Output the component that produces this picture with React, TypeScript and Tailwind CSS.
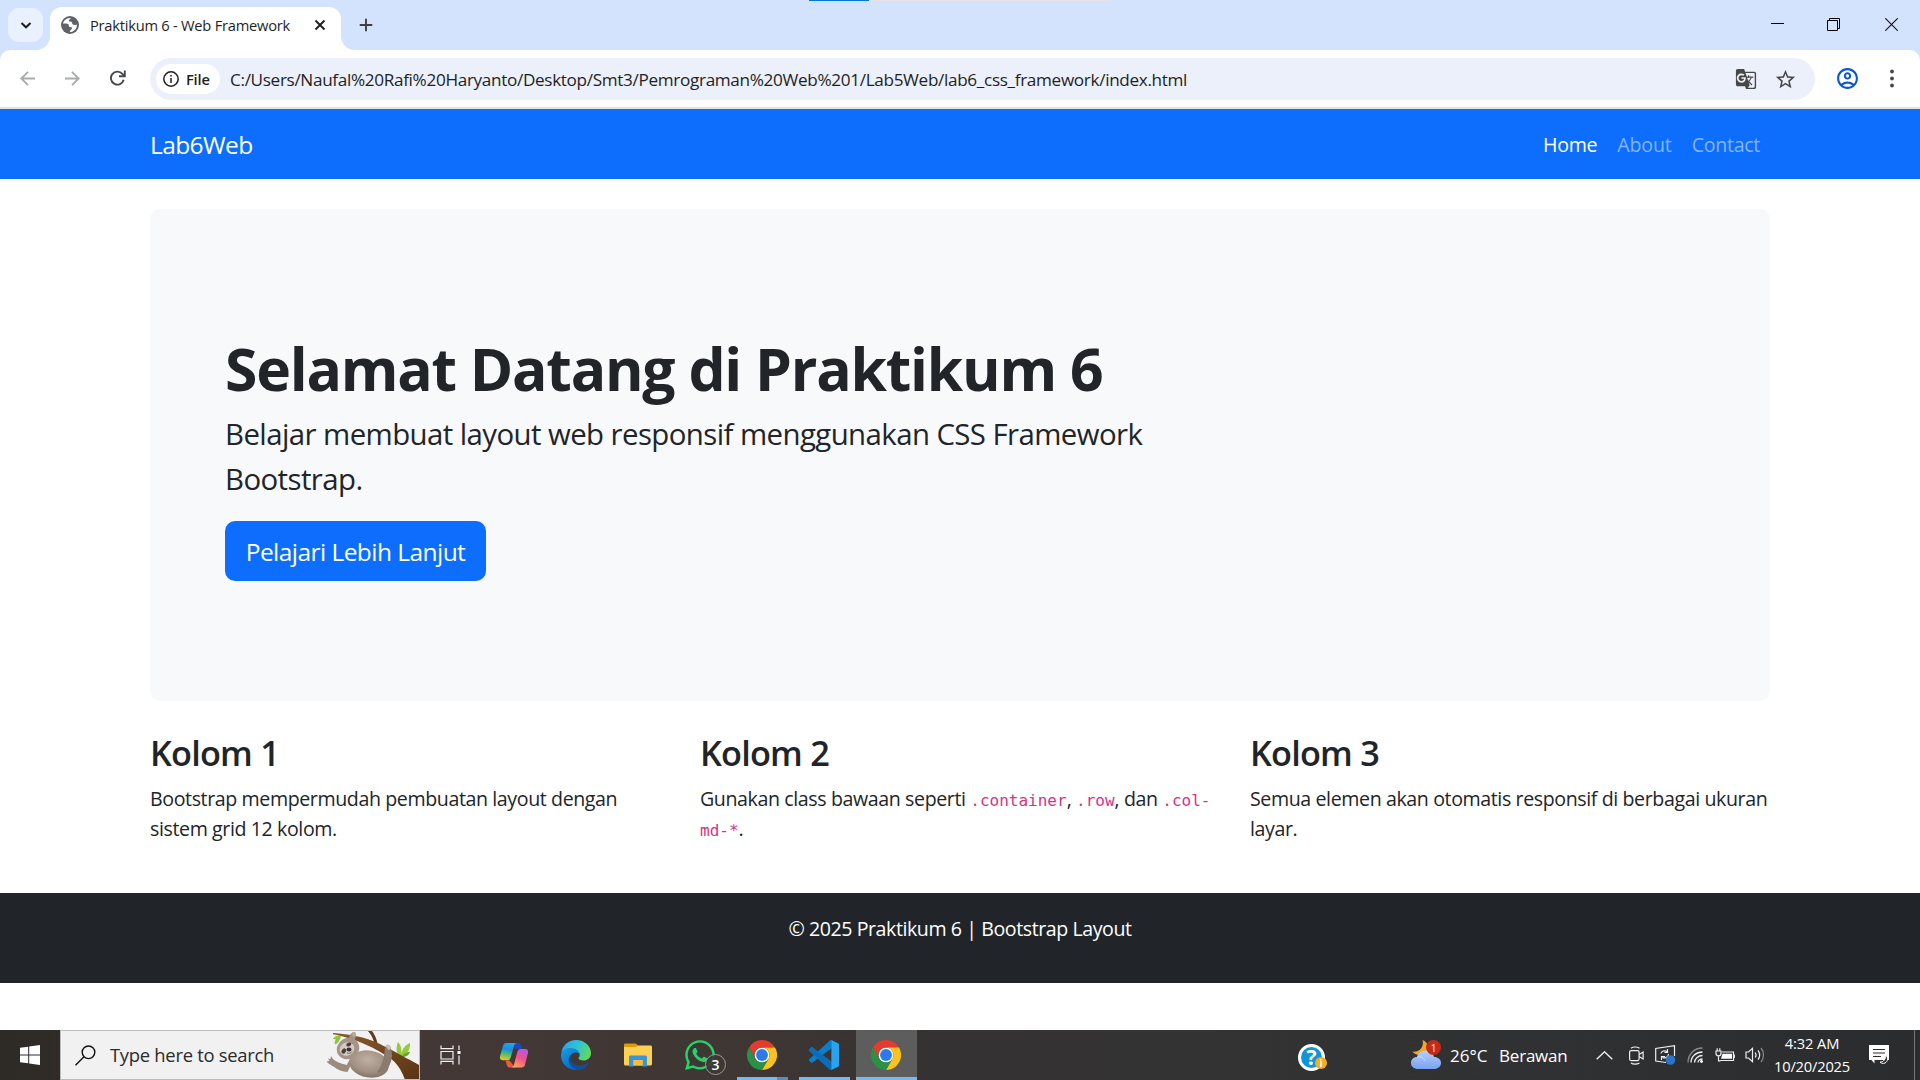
import type { ReactNode } from "react";
import { FaWhatsapp } from "react-icons/fa";
import { MdGTranslate, MdStarOutline, MdOutlineAccountCircle } from "react-icons/md";

function GlobeIcon() {
  return (
    <svg className="size-[18px]" viewBox="0 0 18 18">
      <circle cx="9" cy="9" r="9" fill="#5f6368" />
      <path
        d="M9.2 1.9C5.400 2 2.600 4.400 2 7.600c2.400-.3 5-.2 5.600.9.500 1-.2 1.700.6 2.300.7.500 2.200.1 2.700 1 .4.800-.4 1.700-1.200 2.300-.5.400-.9 1.200-.9 1.900 1.800.1 3.700-.6 5-2 1.600-1.600 2.200-3.500 2.100-5.500-1.500.9-3.500.8-4.300-.2-.7-.9-.1-1.900-1-2.400-.8-.4-2.200 0-2.700-.8-.5-.9.4-1.500 1.300-2 .5-.3.500-.8 0-1.200z"
        fill="#fff"
      />
      <path d="M9.500 1.500c2.500.2 4.700 1.400 5.900 3.500-.8.700-2.200.8-2.900.2-.6-.6-2-.6-2.900-.5.700-.7 1.100-1.400.9-2.200z" fill="#5f6368" />
    </svg>
  );
}

function ChromeIcon() {
  return (
    <svg className="size-[30px]" viewBox="0 0 48 48">
      <circle cx="24" cy="24" r="12" fill="#fff" />
      <path d="M24,12H44.7812a23.9939,23.9939,0,0,0-41.5639.0029L13.6079,30l.0093-.0024A11.9852,11.9852,0,0,1,24,12Z" fill="#e33b2e" />
      <path d="M34.3913,30.0029,24.0007,48A23.994,23.994,0,0,0,44.78,12.0031H23.9989l-.0025.0093A11.985,11.985,0,0,1,34.3913,30.0029Z" fill="#fcc31e" />
      <path d="M13.6086,30.0031,3.218,12.006A23.994,23.994,0,0,0,24.0025,48L34.3931,30.0029l-.0067-.0068a11.9852,11.9852,0,0,1-20.7778.007Z" fill="#2a9147" />
      <circle cx="24" cy="24" r="9.500" fill="#2a7bea" />
    </svg>
  );
}

function VsCodeIcon() {
  return (
    <svg className="size-[30px]" viewBox="0 0 24 24">
      <path
        d="M23.150 2.587L18.210.21a1.494 1.494 0 0 0-1.705.29l-9.460 8.630-4.120-3.128a.999.999 0 0 0-1.276.057L.327 7.261A1 1 0 0 0 .326 8.740L3.899 12 .326 15.260a1 1 0 0 0 .001 1.479L1.650 17.940a.999.999 0 0 0 1.276.057l4.120-3.128 9.460 8.630a1.492 1.492 0 0 0 1.704.29l4.942-2.377A1.500 1.500 0 0 0 24 20.060V3.939a1.500 1.500 0 0 0-.85-1.352zm-5.146 14.861L10.826 12l7.178-5.448v10.896z"
        fill="#0a7fcb"
      />
      <path d="M2.900 6 18 17.450V23.900l-1.500-.4L.3 8.700c-.4-.4-.4-1 0-1.400L1.650 6.060c.4-.3.900-.3 1.250-.06z" fill="#0e6cb5" />
      <path d="M18 .15 23.150 2.587c.5.250.850.8.850 1.352V20.060c0 .6-.3 1.100-.85 1.350L18 23.850z" fill="#29a3ee" />
    </svg>
  );
}

function EdgeIcon() {
  return (
    <svg className="size-[30px]" viewBox="0 0 30 30">
      <defs>
        <linearGradient id="edgeTop" x1="0" y1="0.3" x2="1" y2="0.6">
          <stop offset="0" stopColor="#2aa5e4" />
          <stop offset="0.5" stopColor="#30c1d6" />
          <stop offset="1" stopColor="#61dd52" />
        </linearGradient>
        <linearGradient id="edgeLeft" x1="0" y1="0" x2="0.6" y2="1">
          <stop offset="0" stopColor="#1b9de2" />
          <stop offset="1" stopColor="#0767c4" />
        </linearGradient>
      </defs>
      <path d="M.4 12.500C1.500 5.200 7.500 0 15 0c9 0 15 6.500 15 13.200 0 4.300-3.400 7.300-7.400 7.300-3.300 0-5.200-1.200-5.200-2.200 0-.6 1.300-1 1.300-3.200 0-3.200-3-6.300-8-6.300C6 8.800 2 10.200.4 12.500z" fill="url(#edgeTop)" />
      <path d="M.1 14C.7 10 4.500 7.900 9 7.900c5.500 0 9.500 3.200 9.600 6.900-1-1.500-2.400-2.300-4.200-2.300-3.400 0-5.600 3-5.600 6.500 0 5 4 9.500 8.600 10.800C7.800 31.200-.9 24 .1 14z" fill="url(#edgeLeft)" />
      <path d="M10.500 14.500c-3.300 5.800 1.500 11 8 11 3.400 0 6.300-1.200 8.600-3 .5-.3 1 .2.700.7C25.500 27.300 21.200 30 17.500 30 12 29.400 7.600 25 7.600 19.800c0-2.200 1-4.200 2.900-5.300z" fill="#0f4f9e" />
    </svg>
  );
}

function CopilotIcon() {
  return (
    <svg className="size-[30px]" viewBox="0 0 30 30">
      <defs>
        <linearGradient id="cpLeft" x1="0.5" y1="0" x2="0.3" y2="1">
          <stop offset="0" stopColor="#1ea8f0" />
          <stop offset="0.35" stopColor="#1c8be0" />
          <stop offset="0.65" stopColor="#4fc06a" />
          <stop offset="1" stopColor="#f4c51f" />
        </linearGradient>
        <linearGradient id="cpRight" x1="0.8" y1="0" x2="0.3" y2="1">
          <stop offset="0" stopColor="#b15ae8" />
          <stop offset="0.5" stopColor="#f0518c" />
          <stop offset="1" stopColor="#fda25c" />
        </linearGradient>
      </defs>
      <path d="M14 3h5.500c1.600 0 2.300 1 2.800 2.400L23.500 9H17z" fill="#1b47c9" />
      <path d="M7.500 3h9.800c-1.300.6-1.900 1.600-2.400 3.300L11.700 17.500c-.6 2-1.600 2.800-3.500 2.800H4c-2.400 0-3.600-1.500-2.900-4.200L4 5.700C4.500 4 5.600 3 7.500 3z" fill="url(#cpLeft)" />
      <path d="M16 27.500h-5.500c-1.600 0-2.300-1-2.800-2.400L6.500 20.500h4z" fill="#ee5a3c" />
      <path d="M22.500 27.500h-9.800c1.300-.6 1.900-1.600 2.400-3.300L18.300 12c.6-2 1.600-3 3.500-3H26c2.400 0 3.600 1.500 2.900 4.200L26 24.800c-.5 1.700-1.600 2.700-3.500 2.700z" fill="url(#cpRight)" />
    </svg>
  );
}

function ExplorerIcon() {
  return (
    <svg className="h-[24px] w-[28px]" viewBox="0 0 28 24">
      <path d="M0 2C0 .9.700.5 1.500.5H11c.8 0 1.200.2 1.700.8L14 3v4H0z" fill="#dd9a07" />
      <path d="M0 4h12l1.500-1.500h13c.9 0 1.500.6 1.500 1.500v17c0 .9-.6 1.500-1.500 1.500h-25C.6 22.500 0 21.900 0 21z" fill="#fccf55" />
      <path d="M5 23.500V14c0-1 .7-1.500 1.500-1.500h15c.9 0 1.500.6 1.500 1.500v9.500h-4.500V17h-9v6.500z" fill="#3a94d8" />
      <path d="M9.500 17h9v5.500h-9z" fill="#f6bd3a" />
    </svg>
  );
}

function TaskViewIcon() {
  return (
    <svg className="-ml-[3px] h-[20px] w-[21px]" viewBox="0 0 21 20" fill="none" stroke="#f3f3f3" strokeWidth="1.200">
      <path d="M1 .5v3.200h12V.5M1 19.500v-3.200h12v3.200M1 6.500h12v7.500H1zM19 .5v4.500M19 10.500v9" />
      <path d="M17.500 6h3v3h-3z" fill="#fff" stroke="none" />
    </svg>
  );
}

function SlothArt() {
  return (
    <svg className="h-[48px] w-[95px]" viewBox="5 1 95 48">
      <defs>
        <radialGradient id="fur" cx="0.45" cy="0.35" r="0.75">
          <stop offset="0" stopColor="#bfb0a3" />
          <stop offset="0.6" stopColor="#a08f82" />
          <stop offset="1" stopColor="#75655a" />
        </radialGradient>
        <linearGradient id="bark" x1="0" y1="0" x2="1" y2="1">
          <stop offset="0" stopColor="#8a5a2e" />
          <stop offset="1" stopColor="#5a3413" />
        </linearGradient>
      </defs>
      <path d="M22 6c-4-1-7 .5-8 3 2 0 3 .5 3 .5s-2 1-1 5c3-1 5-4 6-8.500z" fill="#8cc63a" />
      <path d="M80 26c-3-4-3-9-1-14 3 3 4 8 3 13 1-6 4-10 9-12 .5 6-3 11-8 14z" fill="#93cb3c" />
      <path d="M91 22c-1 3-4 5-8 5 1-3 4-5 8-5z" fill="#6aa52a" />
      <path d="M48 0c4 4 6 8 8 15l3 1C58 9 55 3 52 0z" fill="#5e3b1c" />
      <path d="M14 3c16 1 32 4 46 10.500 10 5 20 10.500 26 14 6 3 10 5 14 7.500v15H86c-3-9-8-17-15-22C57 19 42 10 14 4.200z" fill="url(#bark)" />
      <path d="M38 22c-4 2-8 8-10 13-5-1-11-3-14-6l-2-3-.5 3-2.500-.5 1.500 2.500-3 .5c3 3 5 4 7 5 4 3 9 5.500 14 5.500z" fill="#9b8b7e" />
      <ellipse cx="50" cy="34" rx="20" ry="13.500" transform="rotate(10 50 34)" fill="url(#fur)" />
      <path d="M30 9c0-3 1-5 3-6 2-.5 4 .5 4 2l-1 5c2 2 4 5 4 9l-6 5z" fill="#a39285" />
      <path d="M66 18c2-2 5-1 6 1 2 6 1 12-3 19-2 4-8 6-11 4 5-6 7-14 8-24z" fill="#8b7a6e" />
      <ellipse cx="29" cy="18.500" rx="11.500" ry="10.500" transform="rotate(-30 29 18.500)" fill="#a59487" />
      <ellipse cx="28" cy="19" rx="7.500" ry="6.500" transform="rotate(-25 28 19)" fill="#d3cac2" />
      <ellipse cx="24.800" cy="21" rx="2" ry="2.800" transform="rotate(35 24.800 21)" fill="#4a403b" />
      <ellipse cx="29.800" cy="14.500" rx="2.600" ry="1.800" transform="rotate(-20 29.800 14.500)" fill="#4a403b" />
      <ellipse cx="30" cy="19.500" rx="2.500" ry="2" fill="#39312e" />
      <path d="M28 23c2 .8 4 .2 5-1.500" fill="none" stroke="#5a4d46" strokeWidth="0.800" />
      <path d="M67 17c-1-1.500 0-2.500 1-2.500s4 .5 4 3l-2 3z" fill="#cbbdb1" />
      <path d="M33 2.500c2-1 4-.5 4 1.500l-.5 3-3-.5z" fill="#b9a99b" />
    </svg>
  );
}

function WeatherIcon() {
  return (
    <svg className="size-[30px]" viewBox="0 0 30 30">
      <defs>
        <linearGradient id="cloud" x1="0" y1="0" x2="0" y2="1">
          <stop offset="0" stopColor="#b5cffc" />
          <stop offset="1" stopColor="#79a3ef" />
        </linearGradient>
      </defs>
      <path d="M11.500 0c4.500 1.500 6.500 6 4.500 10.500-2.500 5-9.500 6.500-15 1C8 13 13.500 7 11.500 0z" fill="#f5a623" />
      <path d="M7 29c-4 0-7-2.500-7-6s2.500-6 6-6c1-4 4.500-6.500 8.500-6.500 4.500 0 7.500 2.500 8.500 6.500 4 0 7 2.500 7 6s-3 6-7 6z" fill="url(#cloud)" />
      <path d="M6 17c4-1 7 1 8 4" fill="none" stroke="#d1e1ff" strokeWidth="0.800" />
    </svg>
  );
}

function TaskButton({ children, active = false }: { children: ReactNode; active?: boolean }) {
  return (
    <div className={active ? "relative flex h-full w-[61px] items-center justify-center bg-[#5e5d5d] pr-px" : "relative flex h-full w-[62px] items-center justify-center"}>
      {children}
    </div>
  );
}

function TabStrip() {
  return (
    <div className="relative flex h-[50px] bg-[#d3e2fd]">
      <div className="absolute left-[809px] top-0 h-px w-[60px] bg-[#0078d7]" />
      <div className="absolute left-[869px] top-0 h-px w-[241px] bg-[#e4e4e6]" />
      <div className="ml-2 mt-2 flex h-[34px] w-[35px] items-center justify-center rounded-[11px] bg-[#e9f1ff]">
        <svg className="size-[12px]" viewBox="0 0 12 12" fill="none" stroke="#1f1f1f" strokeWidth="2">
          <path d="M1.500 4 6 8.300 10.500 4" />
        </svg>
      </div>
      <div className="relative ml-[7px] mt-[7px] flex h-[43px] w-[291px] items-center rounded-t-[12px] bg-white pb-[8px] pl-[11px]">
        <svg className="absolute -left-[14px] bottom-0 size-[14px]" viewBox="0 0 14 14"><path d="M14 0v14H0A14 14 0 0 0 14 0z" fill="#fff" /></svg>
        <svg className="absolute -right-[14px] bottom-0 size-[14px]" viewBox="0 0 14 14"><path d="M0 0v14h14A14 14 0 0 1 0 0z" fill="#fff" /></svg>
        <GlobeIcon />
        <span className="ml-[11px] w-[212px] whitespace-nowrap pt-px text-[14.700px] leading-5 tracking-[-0.25px] text-[#1f1f1f]">Praktikum 6 - Web Framework</span>
        <svg className="ml-[12px] size-[12px]" viewBox="0 0 12 12" stroke="#1f1f1f" strokeWidth="1.900">
          <path d="M1.500 1.500l9 9M10.500 1.500l-9 9" />
        </svg>
      </div>
      <svg className="ml-[18px] mt-[18px] size-[14px]" viewBox="0 0 14 14" stroke="#3c4043" strokeWidth="1.900">
        <path d="M7 .7v12.600M.7 7h12.600" />
      </svg>
      <div className="ml-auto mr-[22px] flex items-start pt-[18px]">
        <div className="mr-[43px] mt-[5px] h-px w-[13px] bg-black" />
        <svg className="mr-[45px] size-[13px]" viewBox="0 0 13 13" fill="none" stroke="#000" strokeWidth="1">
          <path d="M.5 2.500h10v10H.5zM2.500 2.500V.5h10v10h-2" />
        </svg>
        <svg className="size-[13px]" viewBox="0 0 13 13" stroke="#111" strokeWidth="1.100">
          <path d="M.3.3l12.400 12.400M12.700.3.3 12.700" />
        </svg>
      </div>
    </div>
  );
}

function Toolbar() {
  return (
    <div className="bg-[#d3e2fd]">
      <div className="flex h-[59px] items-start rounded-t-[10px] border-b-2 border-[#e1e3e1] bg-white pt-2">
        <svg className="ml-[20px] mt-[13px] size-[15px]" viewBox="0 0 15 15" fill="none" stroke="#a9acae" strokeWidth="1.900">
          <path d="M15 7.500H1.500M8 .8 1.300 7.500 8 14.200" />
        </svg>
        <svg className="ml-[30px] mt-[13px] size-[15px]" viewBox="0 0 15 15" fill="none" stroke="#a9acae" strokeWidth="1.900">
          <path d="M0 7.500h13.500M7 .8l6.700 6.700L7 14.200" />
        </svg>
        <svg className="ml-[30px] mt-[12px] size-[16px]" viewBox="0 0 16 16" fill="none" stroke="#45484b" strokeWidth="1.900">
          <path d="M13.700 9.800A6.500 6.500 0 1 1 12.400 3.900L14.300 5.700" />
          <path d="M14.800.5v5.800H9" />
        </svg>
        <div className="ml-[24px] flex h-[42px] w-[1665px] items-center rounded-full bg-[#ebf0fa] pl-[6px]">
          <div className="flex h-[30px] w-[64px] items-center rounded-full bg-white pl-[7px]">
            <svg className="size-[16px]" viewBox="0 0 16 16" fill="none" stroke="#1f1f1f" strokeWidth="1.500">
              <circle cx="8" cy="8" r="7.200" />
              <path d="M8 7v5M8 4v1.600" />
            </svg>
            <span className="ml-[7px] text-[14.700px] font-semibold leading-5 tracking-[-0.2px] text-[#1f1f1f]">File</span>
          </div>
          <span className="ml-[10px] whitespace-nowrap pt-px text-[17.150px] leading-6 tracking-[-0.330px] text-[#1f1f1f]">
            C:/Users/Naufal%20Rafi%20Haryanto/Desktop/Smt3/Pemrograman%20Web%201/Lab5Web/lab6_css_framework/index.html
          </span>
          <MdGTranslate className="ml-auto size-[22px] text-[#474747]" />
          <MdStarOutline className="ml-[17px] mr-[18px] size-[23px] text-[#474747]" />
        </div>
        <MdOutlineAccountCircle className="ml-[20px] mt-[8px] size-[25px] text-[#0b57d0]" />
        <svg className="ml-[30px] mt-[11px] h-[19px] w-[4px]" viewBox="0 0 4 19" fill="#45484b">
          <circle cx="2" cy="2.500" r="1.900" />
          <circle cx="2" cy="9.500" r="1.900" />
          <circle cx="2" cy="16.500" r="1.900" />
        </svg>
      </div>
    </div>
  );
}

function Navbar() {
  return (
    <div className="flex h-[70px] items-center justify-between bg-[#0d6efd] px-[150px] pt-[2px]">
      <span className="text-[24.500px] tracking-[-0.6px] text-white">Lab6Web</span>
      <nav className="flex gap-5 pr-[10px] text-[19.600px]">
        <span className="tracking-[-0.3px] text-white">Home</span>
        <span className="tracking-[-0.15px] text-[#85b5fe]">About</span>
        <span className="tracking-[-0.3px] text-[#85b5fe]">Contact</span>
      </nav>
    </div>
  );
}

function Code({ children }: { children: ReactNode }) {
  return <code className="font-['DejaVu_Sans_Mono',monospace] text-[16px] leading-none tracking-normal text-[#d63384]">{children}</code>;
}

function Column({ title, children }: { title: string; children: ReactNode }) {
  return (
    <div className="w-[520px]">
      <h3 className="mb-[9px] pt-px text-[34.300px] font-semibold leading-[42px] tracking-[-0.8px]">{title}</h3>
      <p className="pt-px text-[19.600px] leading-[30px] tracking-[-0.395px]">{children}</p>
    </div>
  );
}

function Page() {
  return (
    <>
      <main className="h-[684px] px-[150px] pt-[30px]">
        <section className="h-[492px] rounded-[10px] bg-[#f8f9fa] px-[75px] pt-[120px]">
          <h1 className="pt-[3px] text-[58.800px] font-bold leading-[72px] tracking-[-1.230px]">Selamat Datang di Praktikum 6</h1>
          <p className="mt-[8px] w-[1000px] text-[29.400px] leading-[45px] tracking-[-0.580px]">
            Belajar membuat layout web responsif menggunakan CSS Framework Bootstrap.
          </p>
          <button className="mt-[19px] h-[60px] w-[261px] rounded-[10px] bg-[#0d6efd] pt-[3px] text-[24.500px] tracking-[-0.550px] text-white">
            Pelajari Lebih Lanjut
          </button>
        </section>
        <section className="mt-[30px] flex gap-[30px]">
          <Column title="Kolom 1">Bootstrap mempermudah pembuatan layout dengan sistem grid 12 kolom.</Column>
          <Column title="Kolom 2">
            Gunakan class bawaan seperti <Code>.container</Code>, <Code>.row</Code>, dan <Code>.col-md-*</Code>.
          </Column>
          <Column title="Kolom 3">Semua elemen akan otomatis responsif di berbagai ukuran layar.</Column>
        </section>
      </main>
      <footer className="mt-[30px] h-[90px] bg-[#212529] pt-[21px] text-center text-[19.600px] leading-[30px] tracking-[-0.430px] text-white">
        © 2025 Praktikum 6 | Bootstrap Layout
      </footer>
    </>
  );
}

function Tray() {
  return (
    <div className="flex h-full items-center">
      <svg className="mr-[16px] h-[9px] w-[17px]" viewBox="0 0 17 9" fill="none" stroke="#eee" strokeWidth="1.400"><path d="M.7 8.300 8.500.8l7.800 7.500" /></svg>
      <svg className="mr-[11px] h-[19px] w-[15px]" viewBox="0 0 15 19" fill="none" stroke="#eee" strokeWidth="1.200">
        <rect x=".6" y="4.600" width="9.500" height="10" rx="1.500" />
        <path d="M10.100 8.500l4-2.500v7l-4-2.500M2 2.200C4 .6 8 .6 10.500 2.200M2 17c2 1.500 6 1.500 8.500 0" />
      </svg>
      <svg className="mr-[11px] h-[20px] w-[21px]" viewBox="0 0 21 20" fill="none" stroke="#eee" strokeWidth="1.200">
        <path d="M11 17.500 .7 16V3.500L19.500.7V11" />
        <path d="M6 8.500C6.500 6 9.500 5 12 6.800M12.500 4v3.500H9.500M13.500 9c0 3-3.500 5-6 3.200M6.500 15v-3.500h3.500" />
        <circle cx="15.500" cy="15" r="4.800" fill="#2c74c9" stroke="none" />
      </svg>
      <svg className="mr-[12px] size-[16px]" viewBox="0 0 16 16" fill="none" strokeWidth="1.300">
        <path d="M1 15.500C1 7.500 7 1 15.500 1" stroke="#8c8c8c" />
        <path d="M4 15.500C4 9.500 9 5 15.500 5M7.500 15.500c0-3.500 3.500-7 8-7M11 15.500c0-2 2-3.500 4.500-3.500" stroke="#eee" />
        <circle cx="14.500" cy="14.500" r="1.400" fill="#fff" />
      </svg>
      <svg className="mr-[10px] h-[14px] w-[20px]" viewBox="0 0 20 14" fill="none" stroke="#eee" strokeWidth="1.200">
        <path d="M5.500 12.500h13v-8.500H7M19.300 6.500v3.500M1 3h5v2.500C6 7 5 7.800 3.500 7.800S1 7 1 5.500zM2.200 3V.3M4.800 3V.3M3.500 7.800v5h2" />
        <path d="M7.500 5.800h9.500v5H6z" fill="#fff" stroke="none" />
      </svg>
      <svg className="h-[18px] w-[20px]" viewBox="0 0 20 18" fill="none" stroke="#eee" strokeWidth="1.200">
        <path d="M1 6v6h2.500l4 3.700V2.300L3.500 6z" />
        <path d="M10.200 6.500c1 1.500 1 3.500 0 5M13 4.300c2 2.800 2 6.600 0 9.400" />
        <path d="M16 2c3.300 4 3.300 10 0 14" stroke="#8c8c8c" />
      </svg>
      <div className="flex w-[94px] flex-col items-center text-[14.700px] leading-[23px] text-white">
        <span className="tracking-[-0.1px]">4:32 AM</span>
        <span className="tracking-[-0.2px]">10/20/2025</span>
      </div>
      <svg className="ml-[10px] mr-[24px] size-[21px]" viewBox="0 0 21 21">
        <path d="M0 0h20v15H5.500v3.500L2.500 15H0z" fill="#fff" />
        <path d="M4 4.500h12M4 8h12M4 11.500h8" stroke="#2d2d2e" strokeWidth="1.200" />
        <path d="M16.500 10c3 2 2.500 6.500-.5 8-2 .9-4 .3-5-1 3.500.3 6-3 5.500-7z" fill="#2d2d2e" stroke="#fff" strokeWidth="1" />
      </svg>
      <div className="mr-[5px] h-full w-px bg-[#777]" />
    </div>
  );
}

function Taskbar() {
  return (
    <div className="mt-auto flex h-[50px] items-center bg-[linear-gradient(90deg,#2e2a25_0%,#352f2b_10%,#433835_22%,#3f3734_38%,#343232_49%,#343333_60%,#303132_80%,#2a2c2d_100%)]">
      <div className="flex w-[60px] justify-center">
        <svg className="size-[20px]" viewBox="0 0 20 20" fill="#fff">
          <path d="M0 2.800 8.200 1.700v7.800H0zM9.200 1.500 20 0v9.500H9.200zM0 10.500h8.200v7.800L0 17.200zM9.200 10.500H20V20L9.200 18.500z" />
        </svg>
      </div>
      <div className="flex h-full w-[360px] items-center border border-[#bdbdbd] bg-[#f1f1f1]">
        <svg className="ml-[14px] size-[21px]" viewBox="0 0 21 21" fill="none" stroke="#111" strokeWidth="1.400">
          <circle cx="13.500" cy="7.300" r="6.300" />
          <path d="M9 11.800.5 20.300" />
        </svg>
        <span className="ml-[14px] w-[170px] whitespace-nowrap text-[18.400px] tracking-[-0.270px] text-[#2b2b2b]">Type here to search</span>
        <div className="ml-auto"><SlothArt /></div>
      </div>
      <div className="ml-px flex h-full">
        <TaskButton><TaskViewIcon /></TaskButton>
        <TaskButton><CopilotIcon /></TaskButton>
        <TaskButton><EdgeIcon /></TaskButton>
        <TaskButton><ExplorerIcon /></TaskButton>
        <TaskButton>
          <FaWhatsapp className="size-[34px] text-[#25d366]" />
          <div className="absolute left-[36px] top-[24px] flex size-[21px] items-center justify-center rounded-full border border-[#9a9a9a] bg-[#3d3735]/90 text-[14px] font-semibold leading-none text-white">3</div>
        </TaskButton>
        <TaskButton>
          <ChromeIcon />
          <div className="absolute bottom-0 left-[6px] h-[3px] w-[40px] bg-[#76b9ed]" />
          <div className="absolute bottom-0 left-[46px] h-[3px] w-[11px] bg-[#5b8db9]" />
        </TaskButton>
        <TaskButton>
          <VsCodeIcon />
          <div className="absolute bottom-0 left-[6px] h-[3px] w-[51px] bg-[#76b9ed]" />
        </TaskButton>
        <div className="ml-px h-full">
          <TaskButton active>
            <ChromeIcon />
            <div className="absolute bottom-0 left-0 h-[3px] w-full bg-[#76b9ed]" />
          </TaskButton>
        </div>
      </div>
      <div className="ml-auto flex h-full items-center">
        <div className="relative mr-[86px] mt-1 flex size-[27px] items-center justify-center rounded-full border-[3px] border-white bg-[#1095d6] text-[21px] font-bold leading-none text-white">
          ?
          <div className="absolute left-[14px] top-[10px] flex size-[12px] items-center justify-center rounded-full bg-[#f2ae1c] text-[10px] font-bold leading-none text-white">i</div>
        </div>
        <div className="relative">
          <WeatherIcon />
          <div className="absolute left-[15px] top-0 flex size-[15px] items-center justify-center rounded-full bg-[#c42b1c] text-[10px] font-medium leading-none text-white">1</div>
        </div>
        <span className="ml-[9px] w-[49px] pt-px text-[17px] text-white">26°C</span>
        <span className="mr-[28px] w-[69px] pt-px text-[17px] tracking-[-0.2px] text-white">Berawan</span>
        <Tray />
      </div>
    </div>
  );
}

export default function App() {
  return (
    <div className="flex h-[1080px] w-[1920px] flex-col overflow-hidden bg-white font-['Open_Sans','Noto_Sans',sans-serif] text-[#212529]">
      <TabStrip />
      <Toolbar />
      <Navbar />
      <Page />
      <Taskbar />
    </div>
  );
}
